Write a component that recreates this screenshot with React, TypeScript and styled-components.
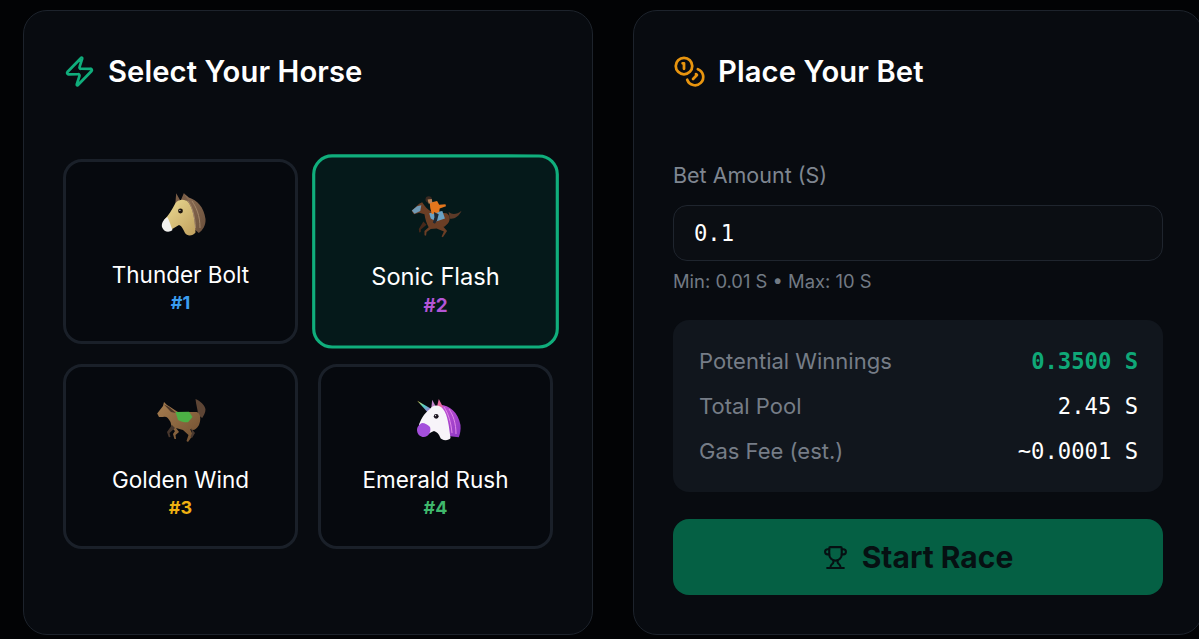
import React from "react";
import styled, { createGlobalStyle } from "styled-components";
import { Zap, Coins, Trophy } from "lucide-react";

const Global = createGlobalStyle`
  html, body { margin: 0; padding: 0; background: #020305; height: 100%; overflow: hidden; }
  * { box-sizing: border-box; }
  #root { font-family: Inter, "Liberation Sans", sans-serif; }
`;

const Page = styled.div`
  display: grid;
  grid-template-columns: 570px 570px;
  column-gap: 40px;
  padding: 10px 0 0 23px;
  width: 1240px;
  height: 639px;
  overflow: hidden;
`;

const Panel = styled.section`
  height: 625px;
  padding: 40px 39px;
  background: #080b10;
  border: 1px solid #1d232c;
  border-radius: 24px;
`;

const Header = styled.header<{ $color: string }>`
  display: flex;
  align-items: center;
  gap: 12px;
  height: 40px;
  color: ${(p) => p.$color};
`;

const Title = styled.h2`
  margin: 0;
  color: #fff;
  font-size: 29.2px;
  font-weight: 600;
  letter-spacing: 0.1px;
`;

const HorseGrid = styled.div`
  display: grid;
  grid-template-columns: repeat(2, 235px);
  grid-auto-rows: 185px;
  gap: 20px;
  margin-top: 68px;
`;

const Card = styled.div<{ $selected?: boolean }>`
  display: flex;
  flex-direction: column;
  align-items: center;
  padding-top: 30px;
  border-radius: 19px;
  border: 3px solid ${(p) => (p.$selected ? "#10ae7c" : "#1a2029")};
  background: ${(p) => (p.$selected ? "#05191a" : "#06090e")};
  transform: ${(p) => (p.$selected ? "scale(1.05)" : "none")};
`;

const Emoji = styled.svg`
  display: block;
  width: 52px;
  height: 46px;
  overflow: visible;
`;

const Name = styled.div`
  margin-top: 23px;
  color: #fff;
  font-size: 22.5px;
  font-weight: 400;
  line-height: 28px;
`;

const Num = styled.div<{ $color: string }>`
  margin-top: 2px;
  color: ${(p) => p.$color};
  font-size: 18px;
  font-weight: 700;
  line-height: 24px;
`;

const Label = styled.label`
  display: block;
  margin-top: 70px;
  color: #7f8690;
  font-size: 21.5px;
  line-height: 28px;
`;

const AmountInput = styled.div`
  display: flex;
  align-items: center;
  height: 56px;
  margin-top: 16px;
  padding: 0 20px;
  background: #0b0e13;
  border: 1px solid #1f252e;
  border-radius: 14px;
  color: #fff;
  font-family: "DejaVu Sans Mono", monospace;
  font-size: 22.2px;
`;

const Hint = styled.div`
  margin-top: 8px;
  color: #727a84;
  font-size: 18.4px;
  line-height: 24px;
`;

const Stats = styled.div`
  display: flex;
  flex-direction: column;
  justify-content: center;
  gap: 17px;
  height: 172px;
  margin-top: 27px;
  padding: 0 25px 0 26px;
  background: #11161d;
  border-radius: 16px;
`;

const Row = styled.div`
  display: flex;
  align-items: center;
  justify-content: space-between;
  height: 28px;
`;

const RowLabel = styled.span`
  color: #767d87;
  font-size: 22px;
`;

const RowValue = styled.span<{ $accent?: boolean }>`
  color: ${(p) => (p.$accent ? "#0fa877" : "#fff")};
  font-family: "DejaVu Sans Mono", monospace;
  font-size: 22.2px;
  font-weight: ${(p) => (p.$accent ? 700 : 400)};
`;

const StartButton = styled.button`
  display: flex;
  align-items: center;
  justify-content: center;
  gap: 14px;
  width: 100%;
  height: 76px;
  margin-top: 27px;
  padding: 0;
  border: 0;
  border-radius: 16px;
  background: #056044;
  color: #061012;
  font-family: inherit;
  font-size: 30px;
  font-weight: 700;
`;

const HorseHead = () => (
  <Emoji viewBox="0 0 52 46">
    <defs>
      <linearGradient id="hh" x1="0" y1="0" x2="1" y2="1">
        <stop offset="0" stopColor="#ecdc94" />
        <stop offset="1" stopColor="#c0a05e" />
      </linearGradient>
      <linearGradient id="hm" x1="0" y1="0" x2="1" y2="1">
        <stop offset="0" stopColor="#8d6f55" />
        <stop offset="1" stopColor="#6a4f3b" />
      </linearGradient>
    </defs>
    <path d="M28.8 1.3L33.8 5.5C42 8 49 15 50.5 27C51 33 48 38 43.8 41L38 36L32 12Z" fill="url(#hm)" />
    <path d="M21.2 1.3L25 8L20.3 12ZM28.8 1.3L33 8L25.5 9Z" fill="#7a5d46" />
    <path d="M20.5 11C24 7 30 7 33 10C38 16 40 28 40.5 40.5C38 44 32 44.5 30 41C28 37 27 34 24 33C20 35 16 38 13 39L9 28C13 24 17 18 20.5 11Z" fill="url(#hh)" />
    <path d="M12.2 25C8 28 6 32 7.2 35.5C9 40 14 41 17.5 38C15.5 34 15 29 12.2 25Z" fill="#f1f1ee" />
    <path d="M33 9C37 14 40 24 40.5 36M37 9C41 15 45 23 45 36" fill="none" stroke="#a3876a" strokeWidth="1" />
    <circle cx="25.5" cy="19" r="2.4" fill="#1a120c" />
    <circle cx="24.9" cy="18.3" r=".6" fill="#fff" />
  </Emoji>
);

const Jockey = () => (
  <Emoji viewBox="0 0 52 46">
    <path d="M38 22C42 25 46 24 50.3 20.6C48 26 43 29 39 28Z" fill="#5c3a28" />
    <path d="M2.7 20.6L10 14L12.8 12.7C15 16 18 20 22 22L36 23C40 25 40 31 36 34C35 35 34 36 33 36L36.5 40L32.5 46L31.3 45.2L33.5 40.5L26.5 37.5L21 38L17 41L16.5 44.5L15 44L15 40L19 36.5C17 33 15.5 28 15 24L10 22.5L5 24Z" fill="#6b3e25" />
    <path d="M14 31L9.6 38L10 41.3L11.5 41L11.6 38.5L17 34Z" fill="#46281a" />
    <path d="M3 20.5L8 16.5L12 15.5L11 21L5.5 23.5Z" fill="#6f9ab6" />
    <path d="M19.5 23L32 21L34.5 28L26 31L21 28Z" fill="#6aa2c4" />
    <path d="M20 13L27 11.5L29 15L35 14.5L35.5 16.5L29.5 18.5L29 22L22 24L20.5 18Z" fill="#e4761d" />
    <circle cx="19" cy="10" r="3" fill="#3a2a22" />
    <path d="M18 10L22 9.5L22.5 13L19 14Z" fill="#b98358" />
    <path d="M24 22L28.5 24L27 30L25 33L23 32L24.5 27Z" fill="#1f2832" />
  </Emoji>
);

const Galloper = () => (
  <Emoji viewBox="0 0 52 46">
    <defs>
      <linearGradient id="gb" x1="0" y1="0" x2="1" y2="1">
        <stop offset="0" stopColor="#a77e50" />
        <stop offset="1" stopColor="#6f4e30" />
      </linearGradient>
    </defs>
    <path d="M40.5 2C45 4 50 8 50.5 12.5C50.5 16 48.5 19 47.2 21L43 18C43 13 41 8 40.5 2Z" fill="#5d4535" />
    <path d="M2.2 16.5L8 9L9 5L12 8C16 10 19 13 23 15L42 15C46 17 46 23 44 28C41 33 38 34 35 32L38 38L33 45L31.5 44L33.5 38L28 33L21 31L24 35L20.5 38L21 42L19.5 42L18 37L20 34L17 31L15.5 25C13 20 11 19 8 20L4 20Z" fill="url(#gb)" />
    <path d="M17 28L12 35L13.8 40.3L15.5 40L14.5 36L20 31Z" fill="#46362c" />
    <path d="M9 7.5L14 10L21 16L16 15Z" fill="#4a3426" />
    <path d="M20.5 15L34 14.7L37.5 20L33 25.3C29 25.5 26 24.5 23 23Z" fill="#4cb045" />
    <path d="M36 31L40 36L37 41L35.5 40L37 36Z" fill="#4a3a30" />
  </Emoji>
);

const Unicorn = () => (
  <Emoji viewBox="0 0 52 46">
    <defs>
      <linearGradient id="um" x1="0" y1="0" x2="1" y2="1">
        <stop offset="0" stopColor="#c853d6" />
        <stop offset="1" stopColor="#8c38c4" />
      </linearGradient>
      <linearGradient id="uh" x1="0" y1="0" x2="1" y2="1">
        <stop offset="0" stopColor="#f5d84e" />
        <stop offset=".45" stopColor="#4fd0c8" />
        <stop offset="1" stopColor="#c65bd5" />
      </linearGradient>
    </defs>
    <path d="M7.2 3.7L21.5 12L18 15.8Z" fill="url(#uh)" />
    <path d="M28 8C38 7 48 14 50.5 28C51 33 50 37 48.8 40.3L38 39L30 14Z" fill="url(#um)" />
    <path d="M22.2 2.7L26 10L21 14Z" fill="#c084c9" />
    <path d="M28.8 2L33 10L26.5 12Z" fill="#e5689f" />
    <path d="M20 12C24 7 30 8 33 12C38 18 39 30 40.5 41C39 44 31 44 30 40C29 37 27 35 24 34C21 35 18 37 15 39L9 28C10 24 14 16 20 12Z" fill="#f7f4f9" />
    <path d="M12 26C8 28 6.5 31 7.2 34.5C8 39 13 41.5 17 39C20 37 21 33 20 30C18 28 15 26 12 26Z" fill="#a44fdc" />
    <path d="M34 10C38 16 41 25 42 36M39 12C43 18 46 26 46 37" fill="none" stroke="#e08ae8" strokeWidth="1" />
    <circle cx="26.2" cy="19.3" r="2.4" fill="#1c1420" />
    <circle cx="25.6" cy="18.6" r=".6" fill="#fff" />
  </Emoji>
);

const horses = [
  { name: "Thunder Bolt", num: "#1", color: "#3b9def", Art: HorseHead },
  { name: "Sonic Flash", num: "#2", color: "#b455d6", Art: Jockey, selected: true },
  { name: "Golden Wind", num: "#3", color: "#eeb012", Art: Galloper },
  { name: "Emerald Rush", num: "#4", color: "#3fb86c", Art: Unicorn },
];

const stats = [
  { label: "Potential Winnings", value: "0.3500 S", accent: true },
  { label: "Total Pool", value: "2.45 S" },
  { label: "Gas Fee (est.)", value: "~0.0001 S" },
];

export default function App() {
  return (
    <Page>
      <Global />
      <Panel>
        <Header $color="#10ae7c">
          <Zap size={33} strokeWidth={2} />
          <Title>Select Your Horse</Title>
        </Header>
        <HorseGrid>
          {horses.map(({ name, num, color, Art, selected }) => (
            <Card key={name} $selected={selected}>
              <Art />
              <Name>{name}</Name>
              <Num $color={color}>{num}</Num>
            </Card>
          ))}
        </HorseGrid>
      </Panel>
      <Panel>
        <Header $color="#e8950f">
          <Coins size={33} strokeWidth={2} />
          <Title>Place Your Bet</Title>
        </Header>
        <Label>Bet Amount (S)</Label>
        <AmountInput>0.1</AmountInput>
        <Hint>Min: 0.01 S • Max: 10 S</Hint>
        <Stats>
          {stats.map((s) => (
            <Row key={s.label}>
              <RowLabel>{s.label}</RowLabel>
              <RowValue $accent={s.accent}>{s.value}</RowValue>
            </Row>
          ))}
        </Stats>
        <StartButton>
          <Trophy size={25} strokeWidth={2} />
          Start Race
        </StartButton>
      </Panel>
    </Page>
  );
}
